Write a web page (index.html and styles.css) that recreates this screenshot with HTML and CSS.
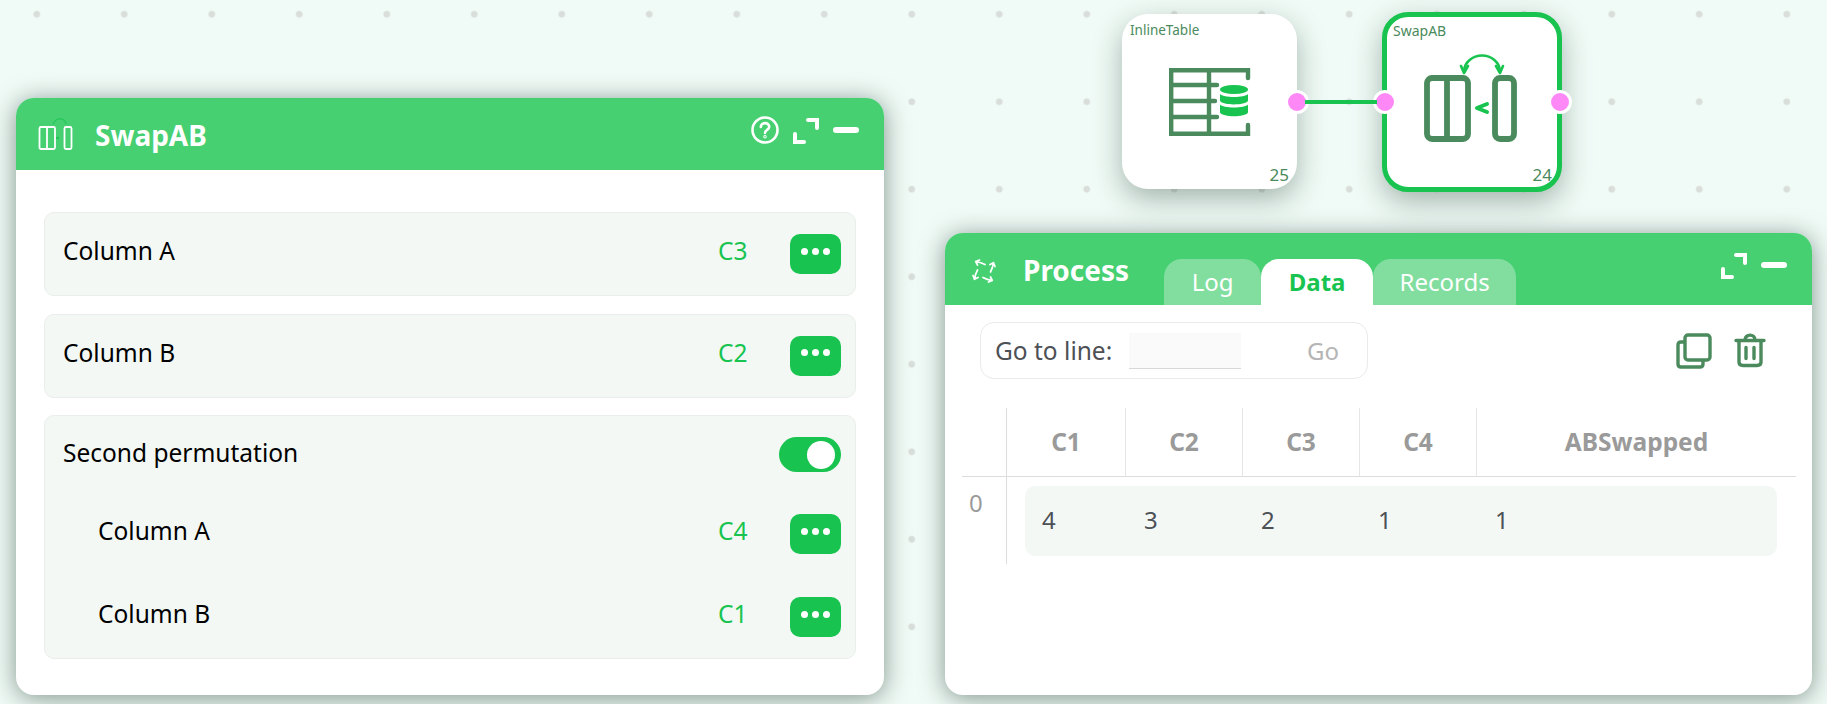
FILE: index.html
```html
<!DOCTYPE html>
<html lang="en">
<head>
<meta charset="utf-8">
<title>SwapAB</title>
<link rel="stylesheet" href="styles.css">
</head>
<body>
<main class="canvas">
  <div class="node node-a">
    <span class="node-name">InlineTable</span>
    <svg class="node-icon icon-table" width="82" height="68" viewBox="0 0 82 68" fill="none" stroke="#4a8a5c" stroke-width="4.400">
      <path d="M79 10V2.200H2.200V65.800H79V57" stroke-linecap="round"/>
      <path d="M2 17H48M2 33H46M2 49H48" stroke-linecap="round"/>
      <path d="M40 2V66"/>
      <g stroke="none" fill="#18c44f">
        <ellipse cx="65" cy="21.500" rx="14" ry="4.500"/>
        <path d="M51 26C54 30 76 30 79 26V33C76 37.500 54 37.500 51 33Z"/>
        <path d="M51 36.500C54 40.500 76 40.500 79 36.500V44.500C76 49.500 54 49.500 51 44.500Z"/>
      </g>
    </svg>
    <span class="node-id">25</span>
    <i class="port port-right"></i>
  </div>

  <div class="node node-b">
    <span class="node-name">SwapAB</span>
    <svg class="node-icon icon-swap" width="96" height="92" viewBox="0 0 96 92" fill="none">
      <g stroke="#4a8a5c" stroke-width="5.800" stroke-linejoin="round">
        <rect x="4" y="24" width="41" height="61" rx="5"/>
        <path d="M24 24V85"/>
        <rect x="72" y="24" width="19" height="61" rx="5"/>
      </g>
      <g stroke="#18c44f" stroke-width="2.600" stroke-linecap="round" stroke-linejoin="round">
        <path d="M41 18C41 8 50 1.500 59 1.500S77 8 77 18"/>
        <path d="M38 12L41 19L45 12M73 12L77 19L80 12"/>
      </g>
      <path d="M64 50L54 54L64 58" stroke="#18c44f" stroke-width="4" fill="none" stroke-linecap="round" stroke-linejoin="round"/>
    </svg>
    <span class="node-id">24</span>
    <i class="port port-left"></i>
    <i class="port port-right"></i>
  </div>

  <svg class="edge" width="72" height="8" viewBox="0 0 72 8"><path d="M0 4H72" stroke="#18c44f" stroke-width="4"/></svg>

  <section class="panel panel-params">
    <header class="panel-head">
      <div class="head-title">
        <svg class="head-icon" width="36" height="36" viewBox="0 0 36 36" fill="none">
          <g stroke="#fff" stroke-width="1.800">
            <rect x="1.500" y="11" width="15.500" height="22" rx="1.500"/>
            <path d="M9 11V33"/>
            <rect x="26.500" y="11" width="7" height="22" rx="1.500"/>
          </g>
          <path d="M15 8C18 1 27 1 28 8M21 21L18 22L21 23" stroke="#18c44f" stroke-width="1"/>
        </svg>
        <h2>SwapAB</h2>
      </div>
      <div class="head-actions">
        <svg width="28" height="28" viewBox="0 0 28 28" fill="none" stroke="#fff" stroke-width="2.600" stroke-linecap="round">
          <circle cx="14" cy="14" r="12.500"/>
          <path d="M9.800 11C10 5.800 18.200 5.800 18.200 11C18.200 14 14 13.800 14 17"/>
          <circle cx="14" cy="20.800" r="0.500"/>
        </svg>
        <svg class="expand" width="26" height="26" viewBox="0 0 26 26" fill="none" stroke="#fff" stroke-width="4" stroke-linecap="round">
          <path d="M15 2H24V10M2 16V24H11"/>
        </svg>
        <svg class="minimize" width="26" height="6" viewBox="0 0 26 6"><rect width="26" height="6" rx="3" fill="#fff"/></svg>
      </div>
    </header>
    <div class="panel-body">
      <div class="param-card">
        <div class="param-row">
          <span class="param-label">Column A</span>
          <span class="param-value">C3</span>
          <button class="more-btn" type="button"><i></i><i></i><i></i></button>
        </div>
      </div>
      <div class="param-card">
        <div class="param-row">
          <span class="param-label">Column B</span>
          <span class="param-value">C2</span>
          <button class="more-btn" type="button"><i></i><i></i><i></i></button>
        </div>
      </div>
      <div class="param-card param-group">
        <div class="toggle-row">
          <span class="param-label">Second permutation</span>
          <span class="toggle"><i></i></span>
        </div>
        <div class="param-row nested">
          <span class="param-label">Column A</span>
          <span class="param-value">C4</span>
          <button class="more-btn" type="button"><i></i><i></i><i></i></button>
        </div>
        <div class="param-row nested">
          <span class="param-label">Column B</span>
          <span class="param-value">C1</span>
          <button class="more-btn" type="button"><i></i><i></i><i></i></button>
        </div>
      </div>
    </div>
  </section>

  <section class="panel panel-process">
    <header class="process-head">
      <svg class="process-icon" width="24" height="24" viewBox="0 0 24 24" fill="none" stroke="#fff" stroke-width="1.700" stroke-linecap="round" stroke-linejoin="round">
        <path d="M13 5.500C10 3.800 7 3 3.700 2.500M7.500 1L3.700 2.500L5.500 6"/>
        <path d="M13 5.500C10 3.800 7 3 3.700 2.500M7.500 1L3.700 2.500L5.500 6" transform="rotate(90 12 12)"/>
        <path d="M13 5.500C10 3.800 7 3 3.700 2.500M7.500 1L3.700 2.500L5.500 6" transform="rotate(180 12 12)"/>
        <path d="M13 5.500C10 3.800 7 3 3.700 2.500M7.500 1L3.700 2.500L5.500 6" transform="rotate(270 12 12)"/>
      </svg>
      <h2>Process</h2>
      <nav class="tabs">
        <span class="tab tab-log">Log</span>
        <span class="tab tab-data">Data</span>
        <span class="tab tab-records">Records</span>
      </nav>
      <div class="head-actions process-actions">
        <svg class="expand" width="26" height="26" viewBox="0 0 26 26" fill="none" stroke="#fff" stroke-width="4" stroke-linecap="round">
          <path d="M15 2H24V10M2 16V24H11"/>
        </svg>
        <svg class="minimize" width="26" height="6" viewBox="0 0 26 6"><rect width="26" height="6" rx="3" fill="#fff"/></svg>
      </div>
    </header>
    <div class="process-body">
      <div class="toolbar">
        <div class="goto">
          <span class="goto-label">Go to line:</span>
          <span class="goto-input"></span>
          <span class="goto-btn">Go</span>
        </div>
        <div class="tools">
          <svg width="36" height="36" viewBox="0 0 36 36" fill="none" stroke="#4a8a5c" stroke-width="3.400" stroke-linejoin="round">
            <rect x="9" y="2" width="25" height="25" rx="3"/>
            <path d="M9 9H5Q2 9 2 12V31Q2 34 5 34H24Q27 34 27 31V27"/>
          </svg>
          <svg width="32" height="36" viewBox="0 0 32 36" fill="none" stroke="#4a8a5c" stroke-width="3.400" stroke-linecap="round" stroke-linejoin="round">
            <path d="M2 7.500H30M5 8V29Q5 32.500 9 32.500H23Q27 32.500 27 29V8M11 7C11 0.500 21 0.500 21 7M12 14.500V25.500M20 14.500V25.500"/>
          </svg>
        </div>
      </div>
      <div class="grid">
        <div class="grid-head">
          <span class="corner"></span>
          <span class="col col-first">C1</span>
          <span class="col">C2</span>
          <span class="col">C3</span>
          <span class="col">C4</span>
          <span class="col col-wide">ABSwapped</span>
        </div>
        <div class="grid-body">
          <span class="row-index">0</span>
          <div class="row-cells">
            <span class="cell cell-first">4</span>
            <span class="cell">3</span>
            <span class="cell">2</span>
            <span class="cell">1</span>
            <span class="cell">1</span>
          </div>
        </div>
      </div>
    </div>
  </section>
</main>
</body>
</html>
```

FILE: styles.css
```css
* { box-sizing: border-box; }

html, body {
  margin: 0;
  padding: 0;
  width: 1827px;
  height: 704px;
  overflow: hidden;
}

body {
  font-family: "Noto Sans", "Open Sans", sans-serif;
  color: #000;
}

.canvas {
  position: relative;
  width: 1827px;
  height: 704px;
  overflow: hidden;
  background-color: #f0faf6;
  background-image: radial-gradient(circle, #d9dedb 3px, transparent 3.800px);
  background-size: 87.500px 87.500px;
  background-position: -7px -29.500px;
}

/* nodes */
.edge {
  position: absolute;
  left: 1305px;
  top: 98px;
}

.node {
  position: absolute;
  background: #fff;
  box-shadow: 0 10px 28px rgba(40, 70, 55, 0.38);
  color: #4a8a5c;
}

.node-a {
  left: 1122px;
  top: 14px;
  width: 175px;
  height: 175px;
  border-radius: 26px;
}

.node-b {
  left: 1382px;
  top: 12px;
  width: 180px;
  height: 180px;
  border-radius: 26px;
  border: 5px solid #18c44f;
}

.node-name {
  position: absolute;
  left: 8px;
  top: 7px;
  font-size: 13.500px;
  line-height: 18px;
}

.node-b .node-name { left: 6px; top: 5px; font-size: 14px; }

.node-id {
  position: absolute;
  right: 8px;
  bottom: 4px;
  font-size: 17px;
  line-height: 20px;
}

.node-b .node-id { right: 5px; bottom: 2px; }

.node-icon { position: absolute; }
.icon-table { left: 47px; top: 54px; }
.icon-swap { left: 36px; top: 37px; }

.port {
  position: absolute;
  top: 50%;
  width: 24px;
  height: 24px;
  margin-top: -12px;
  border-radius: 50%;
  background: #ff88f7;
  border: 3px solid #fff;
}

.node-a .port-right { right: -12px; }
.node-b .port-left { left: -14.500px; }
.node-b .port-right { right: -14.500px; }

/* panels */
.panel {
  position: absolute;
  background: #fff;
  border-radius: 18px;
  box-shadow: 0 3px 24px rgba(20, 50, 35, 0.5);
  overflow: hidden;
}

.panel-params {
  left: 16px;
  top: 98px;
  width: 868px;
  height: 597px;
}

.panel-process {
  left: 945px;
  top: 233px;
  width: 867px;
  height: 462px;
}

.panel-head {
  height: 72px;
  background: #46d072;
  display: flex;
  align-items: center;
  justify-content: space-between;
  padding: 0 25px 0 22px;
  color: #fff;
}

.head-title {
  display: flex;
  align-items: center;
  gap: 21px;
}

.head-title h2 { margin-top: 2px; }

h2 {
  margin: 0;
  font-size: 28px;
  line-height: 38px;
  font-weight: 700;
  color: #fff;
}

.head-actions {
  display: flex;
  align-items: center;
  gap: 14px;
}

.panel-head .head-actions { margin-bottom: 8px; }

.expand { margin-top: 2px; }

.panel-body {
  display: flex;
  flex-direction: column;
  gap: 17.500px;
  padding: 42px 28px 0;
}

.param-card {
  background: #f3f8f5;
  border: 1px solid #e9eeeb;
  border-radius: 10px;
  padding: 21px 14px 21px 18px;
}

.param-group {
  display: flex;
  flex-direction: column;
}

.toggle-row {
  display: flex;
  align-items: center;
  justify-content: space-between;
  height: 35px;
  margin-bottom: 42px;
}

.toggle-row .param-label { margin-bottom: 4px; }

.param-row {
  display: flex;
  align-items: center;
  height: 40px;
}

.nested { padding-left: 35px; }
.nested + .nested { margin-top: 43px; }

.param-label {
  flex: 1;
  font-size: 24.500px;
  line-height: 32px;
  color: #000;
  margin-bottom: 6px;
}

.param-value {
  width: 72px;
  font-size: 24.500px;
  line-height: 32px;
  color: #18c44f;
  margin-bottom: 6px;
}

.more-btn {
  width: 51px;
  height: 40px;
  padding: 0 0 6px;
  border: 0;
  border-radius: 10px;
  background: #18c44f;
  display: flex;
  align-items: center;
  justify-content: center;
  gap: 4px;
}

.more-btn i {
  width: 7px;
  height: 7px;
  border-radius: 50%;
  background: #fff;
}

.toggle {
  width: 62px;
  height: 35px;
  border-radius: 18px;
  background: #18c44f;
  display: flex;
  align-items: center;
  justify-content: flex-end;
  padding-right: 6px;
}

.toggle i {
  width: 28px;
  height: 28px;
  border-radius: 50%;
  background: #fff;
}

/* process */
.process-head {
  height: 72px;
  background: #46d072;
  display: flex;
  align-items: flex-start;
  padding: 26px 0 0 27px;
}

.process-icon { margin-top: 0; margin-right: 27px; }

.process-head h2 { margin-top: -8px; margin-right: 35px; }

.tabs {
  display: flex;
  align-self: flex-end;
  height: 46px;
}

.tab {
  display: flex;
  align-items: center;
  justify-content: center;
  padding-bottom: 2px;
  font-size: 24px;
  color: #fff;
  background: #81de9e;
  border-radius: 18px 18px 0 0;
}

.tab-log { width: 97px; }
.tab-data { width: 112px; background: #fff; color: #18c44f; font-weight: 700; }
.tab-records { width: 143px; }

.process-actions {
  margin-left: auto;
  margin-right: 25px;
  margin-top: -8px;
}

.process-body {
  padding: 17px 16px 0 17px;
}

.toolbar {
  display: flex;
  align-items: center;
  padding-left: 18px;
}

.goto {
  width: 388px;
  height: 57px;
  display: flex;
  align-items: center;
  border: 1px solid #eaeaea;
  border-radius: 14px;
  padding-left: 14px;
  padding-right: 28px;
}

.goto-label {
  width: 134px;
  font-size: 24.500px;
  color: #4d5055;
}

.goto-input {
  width: 112px;
  height: 36px;
  background: #fafafa;
  border-bottom: 1px solid #d8d8d8;
}

.goto-btn {
  margin-left: auto;
  font-size: 24px;
  color: #b5b5b5;
}

.tools {
  margin-left: auto;
  margin-right: 30px;
  display: flex;
  align-items: center;
  gap: 22px;
}

.grid { margin-top: 29px; }

.grid-head {
  display: flex;
  height: 69px;
  border-bottom: 1px solid #dcdcdc;
}

.corner {
  width: 45px;
  border-right: 1px solid #dcdcdc;
}

.col {
  display: flex;
  align-items: center;
  justify-content: center;
  padding-bottom: 2px;
  font-size: 24.500px;
  font-weight: 700;
  color: #9a9a9a;
  border-right: 1px solid #e6e6e6;
  width: 117px;
}

.col-first { width: 119px; }
.col-wide { flex: 1; border-right: 0; }

.grid-body {
  display: flex;
  height: 87px;
}

.row-index {
  width: 45px;
  padding-left: 7px;
  padding-top: 10px;
  font-size: 24px;
  line-height: 32px;
  color: #9a9a9a;
  border-right: 1px solid #dcdcdc;
}

.row-cells {
  display: flex;
  align-items: center;
  margin: 9px 0 0 18px;
  padding-bottom: 4px;
  width: 752px;
  height: 70px;
  border-radius: 10px;
  background: #f3f8f5;
}

.cell {
  width: 117px;
  padding-left: 1px;
  font-size: 24px;
  color: #4d5055;
}

.cell-first { width: 118px; padding-left: 17px; }
```
